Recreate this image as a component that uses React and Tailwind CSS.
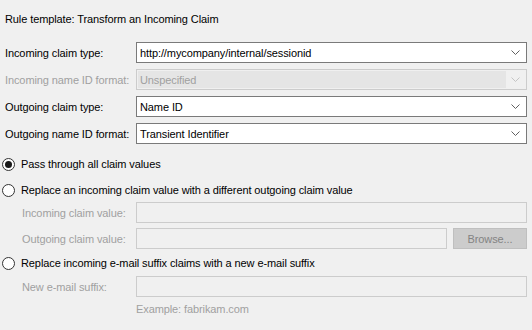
import React from 'react';

const FONT = { fontFamily: '"Liberation Sans", Arial, sans-serif' };

function Chevron({ disabled }) {
  return (
    <svg width="9" height="5" viewBox="0 0 9 5" className="shrink-0">
      <path d="M0.5 0.5 L4.5 4.5 L8.5 0.5" fill="none" stroke={disabled ? '#c4c4c4' : '#606060'} strokeWidth="1" />
    </svg>
  );
}

function Combo({ value, disabled }) {
  if (disabled) {
    return (
      <div className="h-[21px] border border-[#cccccc] bg-[#f0f0f0] flex items-stretch p-[1px]">
        <div className="flex-1 bg-[#e5e5e5] flex items-center pl-[2px] text-[#a0a0a0]">{value}</div>
        <div className="w-[19px] flex items-center justify-center">
          <Chevron disabled />
        </div>
      </div>
    );
  }
  return (
    <div className="h-[21px] border border-[#7a7a7a] bg-white flex items-center pl-[3px] pr-[6px] text-black">
      <span className="flex-1 whitespace-nowrap">{value}</span>
      <Chevron />
    </div>
  );
}

function ComboRow({ label, value, disabled }) {
  return (
    <div className="grid grid-cols-[131px_1fr] items-center">
      <span className={`whitespace-nowrap ${disabled ? 'text-[#a0a0a0]' : 'text-black'}`}>{label}</span>
      <Combo value={value} disabled={disabled} />
    </div>
  );
}

function Radio({ checked, label }) {
  return (
    <div className="flex items-center h-[16px] -ml-[3px]">
      <span className="w-[13px] h-[13px] rounded-full border border-[#333333] bg-white flex items-center justify-center">
        {checked && <span className="w-[7px] h-[7px] rounded-full bg-[#1a1a1a]" />}
      </span>
      <span className="ml-[6px] text-black whitespace-nowrap">{label}</span>
    </div>
  );
}

function TextRow({ label, children }) {
  return (
    <div className="grid grid-cols-[114px_1fr] items-center pl-[17px]">
      <span className="text-[#a0a0a0] whitespace-nowrap">{label}</span>
      {children}
    </div>
  );
}

function DisabledBox() {
  return <div className="h-[21px] border border-[#cccccc] bg-[#f0f0f0] flex-1" />;
}

export default function App() {
  return (
    <div className="w-[532px] h-[330px] bg-[#f0f0f0] text-[11px] tracking-[-0.1px] leading-[16px] overflow-hidden px-[5px]" style={FONT}>
      <div className="mt-[11px] text-black">Rule template: Transform an Incoming Claim</div>

      <div className="mt-[15px] flex flex-col gap-[6px]">
        <ComboRow label="Incoming claim type:" value="http://mycompany/internal/sessionid" />
        <ComboRow label="Incoming name ID format:" value="Unspecified" disabled />
        <ComboRow label="Outgoing claim type:" value="Name ID" />
        <ComboRow label="Outgoing name ID format:" value="Transient Identifier" />
      </div>

      <div className="mt-[12px]">
        <Radio checked label="Pass through all claim values" />
      </div>
      <div className="mt-[10px]">
        <Radio label="Replace an incoming claim value with a different outgoing claim value" />
      </div>
      <div className="mt-[4px] flex flex-col gap-[5px]">
        <TextRow label="Incoming claim value:">
          <DisabledBox />
        </TextRow>
        <TextRow label="Outgoing claim value:">
          <div className="flex items-center gap-[6px]">
            <DisabledBox />
            <div className="w-[74px] h-[21px] border border-[#bfbfbf] bg-[#cccccc] flex items-center justify-center text-[#838383]">
              Browse...
            </div>
          </div>
        </TextRow>
      </div>
      <div className="mt-[6px]">
        <Radio label="Replace incoming e-mail suffix claims with a new e-mail suffix" />
      </div>
      <div className="mt-[5px]">
        <TextRow label="New e-mail suffix:">
          <DisabledBox />
        </TextRow>
      </div>
      <div className="mt-[4px] pl-[131px] text-[#a0a0a0]">Example: fabrikam.com</div>
    </div>
  );
}
